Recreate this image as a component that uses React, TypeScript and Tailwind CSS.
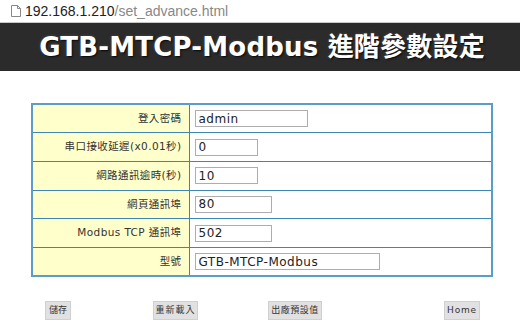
import React from "react";

const ROWS: { label: string; value: string; w: string }[] = [
  { label: "登入密碼", value: "admin", w: "w-[113px]" },
  { label: "串口接收延遲(x0.01秒)", value: "0", w: "w-[63px]" },
  { label: "網路通訊逾時(秒)", value: "10", w: "w-[63px]" },
  { label: "網頁通訊埠", value: "80", w: "w-[77px]" },
  { label: "Modbus TCP 通訊埠", value: "502", w: "w-[77px]" },
  { label: "型號", value: "GTB-MTCP-Modbus", w: "w-[185px]" },
];

const font = "font-['DejaVu_Sans','Noto_Sans_CJK_TC',sans-serif]";

export default function App() {
  return (
    <div className={`w-[520px] h-[334px] bg-white overflow-hidden ${font}`}>
      {/* address bar */}
      <div className="h-[23px] flex items-center border-b border-[#c8c8c8] pl-[11px] gap-[4px]">
        <svg width="10" height="12" viewBox="0 0 10 12">
          <path d="M0.5 0.5h6l3 3v8h-9z" fill="#fff" stroke="#888" />
          <path d="M6.5 0.5v3h3" fill="none" stroke="#888" />
        </svg>
        <span className="font-['Liberation_Sans',sans-serif] text-[14px] text-[#222] leading-none">
          192.168.1.210<span className="text-[#888]">/set_advance.html</span>
        </span>
      </div>

      {/* banner */}
      <div className="h-[48px] bg-[#2b2b2b] flex items-center justify-center pl-[4px]">
        <h1 className="text-white font-bold text-[26px] tracking-[0.2px] [text-shadow:1px_1px_2px_#000,0_0_3px_#555] font-['DejaVu_Sans','Noto_Sans_CJK_TC',sans-serif]">
          GTB-MTCP-Modbus 進階參數設定
        </h1>
      </div>

      {/* table */}
      <div className="pt-[32px] pl-[31px]">
        <table className="w-[462px] border-collapse border-2 border-[#5b9cc8]">
          <tbody>
            {ROWS.map((r) => (
              <tr key={r.label} className="h-[28.7px]">
                <td className="w-[157px] bg-[#ffffcc] border border-[#3f86b5] text-right pr-[7px] text-[10.5px] text-[#333] tracking-[0.4px] whitespace-nowrap">
                  {r.label}
                </td>
                <td className="border border-[#3f86b5] pl-[5px]">
                  <input
                    readOnly
                    value={r.value}
                    className={`${r.w} h-[17px] border border-[#adadad] px-[3px] text-[12px] text-[#222] tracking-[0.5px] outline-none block`}
                  />
                </td>
              </tr>
            ))}
          </tbody>
        </table>
      </div>

      {/* buttons */}
      <div className="relative h-[40px]">
        <div className="flex items-center pt-[24px]">
          <button className="ml-[45px] w-[26px] h-[19px] bg-[#e1e1e1] border border-[#d0d0d0] text-[9px] text-[#333] leading-none">儲存</button>
          <button className="ml-[82px] w-[45px] h-[19px] bg-[#e1e1e1] border border-[#d0d0d0] text-[9px] text-[#333] tracking-[1px] leading-none">重新載入</button>
          <button className="ml-[70px] w-[54px] h-[19px] bg-[#e1e1e1] border border-[#d0d0d0] text-[9px] text-[#333] tracking-[0.5px] leading-none">出廠預設值</button>
          <button className="ml-[122px] w-[36px] h-[19px] bg-[#e1e1e1] border border-[#d0d0d0] text-[9px] text-[#333] tracking-[0.8px] leading-none">Home</button>
        </div>
      </div>
    </div>
  );
}
